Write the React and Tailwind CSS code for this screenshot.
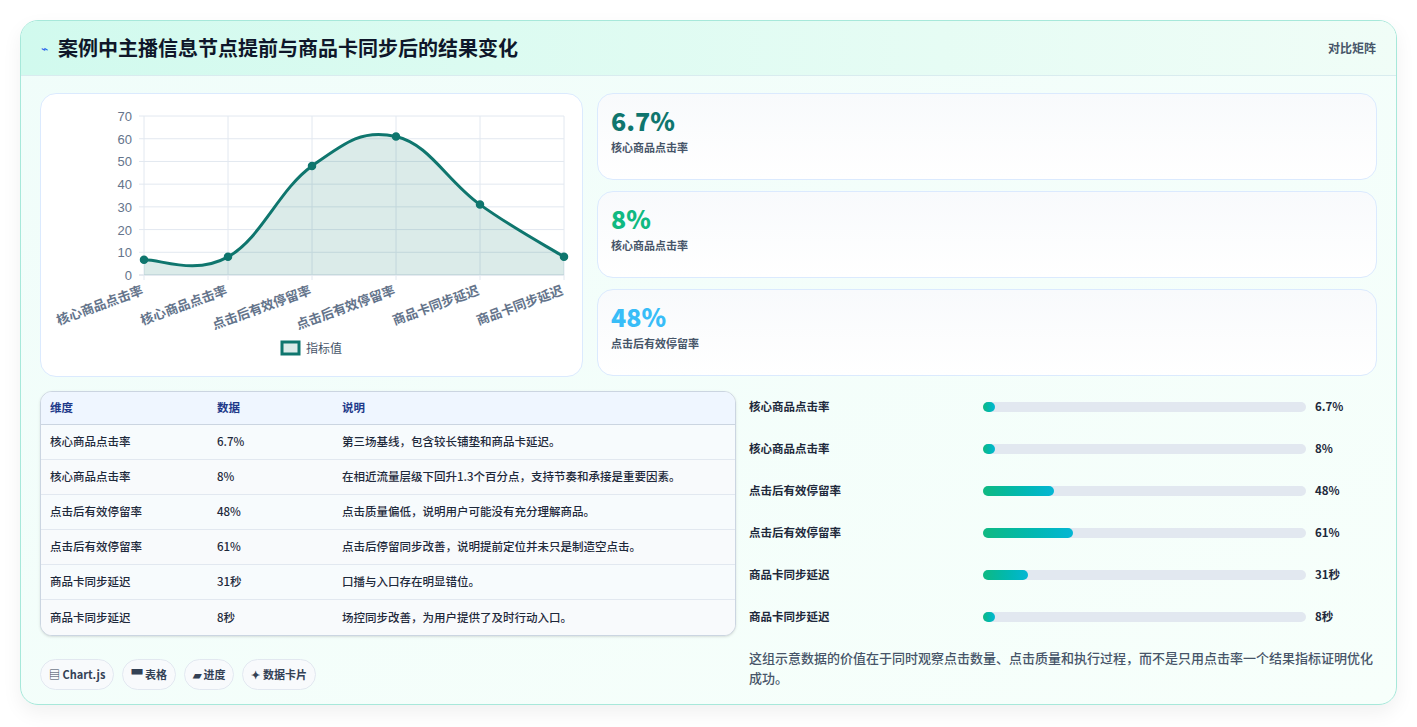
const labels = ["核心商品点击率", "核心商品点击率", "点击后有效停留率", "点击后有效停留率", "商品卡同步延迟", "商品卡同步延迟"];
const vals = [6.7, 8, 48, 61, 31, 8];
const notes = [
  "第三场基线，包含较长铺垫和商品卡延迟。",
  "在相近流量层级下回升1.3个百分点，支持节奏和承接是重要因素。",
  "点击质量偏低，说明用户可能没有充分理解商品。",
  "点击后停留同步改善，说明提前定位并未只是制造空点击。",
  "口播与入口存在明显错位。",
  "场控同步改善，为用户提供了及时行动入口。",
];
const shown = ["6.7%", "8%", "48%", "61%", "31秒", "8秒"];
const bars = [2, 2, 22, 28, 14, 2];

function Chart() {
  const xs = [103, 187, 271, 355, 439, 523];
  const y = (v) => 181 - v * 2.271;
  const pts = vals.map((v, i) => [xs[i], y(v)]);
  // smooth curve via catmull-rom
  let d = `M${pts[0][0]},${pts[0][1]}`;
  for (let i = 0; i < pts.length - 1; i++) {
    const p0 = pts[i - 1] || pts[i];
    const p1 = pts[i];
    const p2 = pts[i + 1];
    const p3 = pts[i + 2] || p2;
    const t = 0.4;
    const c1 = [p1[0] + (p2[0] - p0[0]) * t / 2, p1[1] + (p2[1] - p0[1]) * t / 2];
    const c2 = [p2[0] - (p3[0] - p1[0]) * t / 2, p2[1] - (p3[1] - p1[1]) * t / 2];
    d += ` C${c1[0]},${c1[1]} ${c2[0]},${c2[1]} ${p2[0]},${p2[1]}`;
  }
  const area = d + ` L523,181 L103,181 Z`;
  return (
    <svg width="542" height="283" className="block" style={{ fontFamily: "'Liberation Sans','Noto Sans CJK SC',sans-serif" }}>
      {[0, 10, 20, 30, 40, 50, 60, 70].map((v) => (
        <g key={v}>
          <line x1="98" x2="523" y1={y(v)} y2={y(v)} stroke={v === 0 ? "#cbd5e1" : "#e2e8f0"} />
          <text x="91" y={y(v) + 5} textAnchor="end" fontSize="13" fill="#64748b">{v}</text>
        </g>
      ))}
      {xs.map((x) => (
        <line key={x} x1={x} x2={x} y1={y(70)} y2="186" stroke="#e2e8f0" />
      ))}
      <path d={area} fill="rgba(15,118,110,0.15)" />
      <path d={d} fill="none" stroke="#0f766e" strokeWidth="3" />
      {pts.map((p, i) => (
        <circle key={i} cx={p[0]} cy={p[1]} r="3.5" fill="#0f766e" stroke="#0f766e" strokeWidth="1.5" />
      ))}
      {labels.map((l, i) => (
        <text key={i} x={xs[i]} y="200" textAnchor="end" fontSize="13" fontWeight="bold" fill="#64748b" transform={`rotate(-20 ${xs[i]} 200)`}>{l}</text>
      ))}
      <rect x="241" y="248" width="17" height="12" fill="rgba(15,118,110,0.15)" stroke="#0f766e" strokeWidth="3" />
      <text x="265" y="259" fontSize="12" fill="#475569">指标值</text>
    </svg>
  );
}

function Metric({ value, label, color }) {
  return (
    <div className="h-[87px] rounded-2xl border border-[#dbeafe] bg-gradient-to-b from-[#f8fafc] to-white px-[13px] pt-[10px]">
      <div className={`text-[25px] font-extrabold leading-[32px] ${color}`}>{value}</div>
      <div className="mt-[3px] text-[11px] font-semibold text-[#475569]">{label}</div>
    </div>
  );
}

export default function App() {
  return (
    <div className="min-h-[727px] bg-white p-5" style={{ fontFamily: "'Noto Sans CJK SC','Noto Sans',sans-serif" }}>
      <div className="overflow-hidden rounded-[18px] border border-[#a7e8da] bg-gradient-to-br from-[#f0fdfa] to-[#f7fffb] shadow-[0_8px_20px_rgba(0,0,0,0.06)]">
        <div className="flex h-[55px] items-center justify-between border-b border-[#d9ecef] bg-gradient-to-r from-[#d1faee] to-[#f0fdf7] px-5">
          <div className="flex items-center gap-[10px]">
            <span className="text-[12px] text-[#2563eb]">⌁</span>
            <h1 className="text-[20px] font-bold text-[#0f172a]">案例中主播信息节点提前与商品卡同步后的结果变化</h1>
          </div>
          <span className="text-[12px] font-semibold text-[#475569]">对比矩阵</span>
        </div>
        <div className="px-[19px] pt-[17px] pb-[14px]">
          <div className="flex gap-[14px]">
            <div className="h-[284px] w-[543px] shrink-0 rounded-2xl border border-[#dbeafe] bg-white">
              <Chart />
            </div>
            <div className="flex flex-1 flex-col gap-[11px]">
              <Metric value="6.7%" label="核心商品点击率" color="text-[#0f766e]" />
              <Metric value="8%" label="核心商品点击率" color="text-[#10b981]" />
              <Metric value="48%" label="点击后有效停留率" color="text-[#38bdf8]" />
            </div>
          </div>
          <div className="mt-[14px] flex gap-[12px]">
            <div className="w-[696px] shrink-0">
              <div className="overflow-hidden rounded-xl border border-[#cbd5e1] bg-white shadow-sm">
                <div className="flex h-[33px] items-center border-b border-[#cbd5e1] bg-[#eff6ff] px-[9px] text-[11.5px] font-bold text-[#1e3a8a]">
                  <span className="w-[167px]">维度</span>
                  <span className="w-[125px]">数据</span>
                  <span>说明</span>
                </div>
                {labels.map((l, i) => (
                  <div key={i} className={`flex h-[35px] items-center px-[9px] text-[11.5px] font-medium text-[#1e293b] ${i < 5 ? "border-b border-[#e2e8f0]" : ""} ${i % 2 ? "bg-[#f8fafc]" : "bg-[#f7fbfd]"}`}>
                    <span className="w-[167px]">{l}</span>
                    <span className="w-[125px]">{shown[i]}</span>
                    <span>{notes[i]}</span>
                  </div>
                ))}
              </div>
              <div className="mt-[23px] flex gap-[8px]">
                {["▤ Chart.js", "▀ 表格", "▰ 进度", "✦ 数据卡片"].map((c) => (
                  <span key={c} className="rounded-full border border-[#e2e8f0] bg-[#f8fafc] px-[8px] py-[6px] text-[11px] font-bold text-[#334155]">{c}</span>
                ))}
              </div>
            </div>
            <div className="-mt-[5px] flex-1 pl-[1px]">
              {labels.map((l, i) => (
                <div key={i} className="flex h-[42px] items-center text-[11.5px] font-bold text-[#1e293b]">
                  <span className="w-[234px]">{l}</span>
                  <div className="h-[10px] w-[323px] rounded-full bg-[#e2e8f0]">
                    <div className="h-full min-w-[12px] rounded-full bg-gradient-to-r from-[#10b981] to-[#06b6d4]" style={{ width: `${bars[i]}%` }} />
                  </div>
                  <span className="ml-[9px]">{shown[i]}</span>
                </div>
              ))}
              <p className="mt-[10px] text-[13px] font-medium leading-[20px] text-[#475569]">这组示意数据的价值在于同时观察点击数量、点击质量和执行过程，而不是只用点击率一个结果指标证明优化成功。</p>
            </div>
          </div>
        </div>
      </div>
    </div>
  );
}
